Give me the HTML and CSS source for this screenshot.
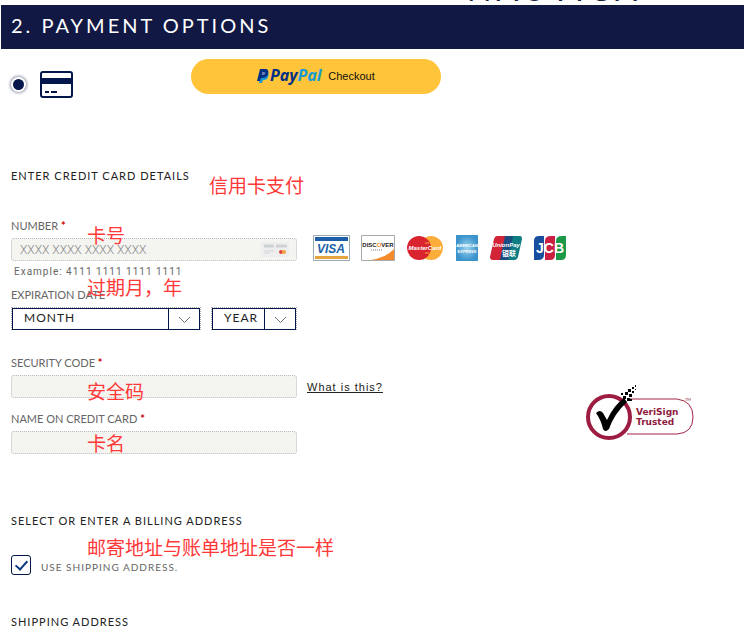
FILE: index.html
```html
<!DOCTYPE html>
<html lang="en">

<head>
    <meta charset="utf-8">
    <meta name="viewport" content="width=device-width, initial-scale=1">
    <title>Payment Options</title>
    <link rel="stylesheet" href="styles.css">
</head>

<body>
    <header class="brand"><span class="brand-name">NAUTICA</span></header>
    <h1 class="step-title">2. PAYMENT OPTIONS</h1>

    <main class="checkout">
        <div class="methods">
            <label class="method-card">
                <input class="method-radio" type="radio" name="method" aria-label="Credit card" checked>
                <svg width="33" height="27" viewBox="0 0 33 27">
                    <rect x="1" y="1" width="31" height="25" rx="2" fill="#fff" stroke="#03174a" stroke-width="2" />
                    <path d="M1 7h31v6H1z" fill="#03174a" />
                    <path d="M5 21h4M11 21h6" stroke="#03174a" stroke-width="2" />
                </svg>
            </label>
            <button class="paypal" type="button">
                <svg class="paypal-logo" width="68" height="18" viewBox="0 0 68 18" role="img" aria-label="PayPal">
                    <path d="M5 5h4c3 0 3 3 2 5-1 3-3 3-5 3l-1 3H2z" fill="#179bd7" />
                    <path d="M3 2h5c3 0 4 2 3 5-1 3-3 4-6 4H4l-1 3H0z" fill="#002f86" />
                    <path d="M5 5h2c2 0 2 3-1 3H5z" fill="#6c7fb4" />
                    <text class="paypal-text" x="13" y="14"><tspan fill="#002f86">Pay</tspan><tspan fill="#179bd7">Pal</tspan></text>
                </svg>
                <span>Checkout</span>
            </button>
        </div>

        <h2 class="heading">ENTER CREDIT CARD DETAILS
            <span class="note note-method" lang="zh">信用卡支付</span>
        </h2>

        <div class="number-row">
            <div class="field number-field">
                <label class="label" for="number">NUMBER <b class="req">*</b></label>
                <div class="number-box">
                    <input class="input" id="number" type="text" placeholder="XXXX XXXX XXXX XXXX">
                    <svg class="number-icon" width="28" height="15" viewBox="0 0 28 15">
                        <path d="M0 0h28v15H0z" fill="#eeeeef" />
                        <path d="M3 4h10M15 4h11" stroke="#cdd1d4" stroke-width="3" />
                        <path d="M3 9h10M3 11h6" stroke="#cfd3d6" />
                        <circle cx="20" cy="10" r="2" fill="#e0443e" />
                        <circle cx="23" cy="10" r="2" fill="#f5a33b" />
                    </svg>
                </div>
                <span class="note note-number" lang="zh">卡号</span>
            </div>

            <div class="cards">
                <!-- visa -->
                <svg width="37" height="26" viewBox="0 0 37 26">
                    <path d="M.5.5h36v25H.5z" fill="#fff" stroke="#9dabb0" />
                    <path d="M2 2h33v4H2z" fill="#1c5fa8" />
                    <path d="M2 21h33v3H2z" fill="#e5a43c" />
                    <text class="logo logo-visa" x="18" y="18">VISA</text>
                </svg>
                <!-- discover -->
                <svg width="34" height="26" viewBox="0 0 34 26">
                    <path d="M.5.5h33v25H.5z" fill="#fff" stroke="#a9a9a9" />
                    <path d="M33 14v11H10q16-3 23-11z" fill="#f58a2c" />
                    <text class="logo logo-discover" x="17" y="12">DISC<tspan fill="#f58a2c">O</tspan>VER</text>
                    <path d="M10 15h12" stroke="#777" stroke-dasharray="1 1" />
                </svg>
                <!-- mastercard -->
                <svg width="38" height="26" viewBox="0 0 38 26">
                    <circle cx="25" cy="13" r="12" fill="#fbad3c" />
                    <circle cx="13" cy="13" r="12" fill="#d9232e" />
                    <path d="M19 8h6M19 18h6" stroke="#fbad3c" stroke-dasharray="4 1" />
                    <text class="logo logo-master" x="19" y="15">MasterCard</text>
                </svg>
                <!-- american express -->
                <svg width="24" height="26" viewBox="0 0 24 26">
                    <defs>
                        <radialGradient id="amex">
                            <stop offset="0" stop-color="#9ad4ef" />
                            <stop offset="1" stop-color="#3b93cb" />
                        </radialGradient>
                    </defs>
                    <path d="M1 0h22v26H1z" fill="url(#amex)" />
                    <text class="logo logo-amex" x="12" y="12">AMERICAN</text>
                    <text class="logo logo-amex" x="12" y="18">EXPRESS</text>
                </svg>
                <!-- union pay -->
                <svg width="32" height="26" viewBox="0 0 32 26">
                    <path d="M7 1h10l-5 24H3q-3 0-3-3L4 4q1-3 3-3z" fill="#d32336" />
                    <path d="M15 1h9l-5 24h-9z" fill="#1b4b80" />
                    <path d="M23 1h7q2 0 2 3l-4 18q-1 3-3 3h-7z" fill="#0d7c83" />
                    <text class="logo logo-union" x="16" y="12">UnionPay</text>
                    <text class="logo logo-union-zh" x="19" y="21">银联</text>
                </svg>
                <!-- jcb -->
                <svg width="34" height="26" viewBox="0 0 34 26">
                    <path d="M6 1h5v19q0 5-6 5H1V6q0-5 5-5z" fill="#174e9e" />
                    <path d="M18 1h4v19q0 5-5 5h-5V6q0-5 6-5z" fill="#cb1f42" />
                    <path d="M29 1h4v19q0 5-5 5h-5V6q0-5 6-5z" fill="#1b9848" />
                    <text class="logo logo-jcb" x="17" y="18">JCB</text>
                </svg>
            </div>
        </div>

        <p class="example">Example: 4111 1111 1111 1111</p>

        <div class="field expiry">
            <span class="label">EXPIRATION DATE</span>
            <span class="note note-expiry" lang="zh">过期月，年</span>
            <div class="selects">
                <div class="select-box select-month">
                    <select class="select" aria-label="Month">
                        <option>MONTH</option>
                    </select>
                    <svg class="arrow" width="13" height="8" viewBox="0 0 13 8">
                        <path d="M1 1l5.500 5.500L12 1" fill="none" stroke="#777" />
                    </svg>
                </div>
                <div class="select-box select-year">
                    <select class="select" aria-label="Year">
                        <option>YEAR</option>
                    </select>
                    <svg class="arrow" width="13" height="8" viewBox="0 0 13 8">
                        <path d="M1 1l5.500 5.500L12 1" fill="none" stroke="#777" />
                    </svg>
                </div>
            </div>
        </div>

        <div class="verify">
            <div class="verify-fields">
                <div class="field">
                    <label class="label" for="code">SECURITY CODE <b class="req">*</b></label>
                    <div class="code-row">
                        <input class="input" id="code" type="text">
                        <a class="help" href="#">What is this?</a>
                    </div>
                    <span class="note note-code" lang="zh">安全码</span>
                </div>
                <div class="field">
                    <label class="label" for="name">NAME ON CREDIT CARD <b class="req">*</b></label>
                    <input class="input" id="name" type="text">
                    <span class="note note-name" lang="zh">卡名</span>
                </div>
            </div>
            <svg class="seal" width="110" height="56" viewBox="0 0 110 56">
                <path d="M42 14h50q16 2 16 18t-16 17H42" fill="#fff" stroke="#a32749" />
                <circle cx="24" cy="32" r="21" fill="#fff" stroke="#9d1c42" stroke-width="4" />
                <path d="M11 28q4-4 7 0l4 7q7-15 17-22l3 4Q29 29 24 44q-4 4-6 0-2-9-7-16z" fill="#000" />
                <path d="M38 11h3v3h-3zM42 13h3v3h-3zM40 7h3v3h-3zM44 9h3v3h-3zM43 4h3v3h-3zM47 6h2v2h-2zM47 2h2v2h-2zM50 4h1v1h-1zM50 0h1v2h-1zM36 8h2v2h-2zM45 14h2v2h-2z" fill="#000" />
                <text class="seal-text" x="51" y="30">VeriSign</text>
                <text class="seal-text" x="51" y="40">Trusted</text>
                <text class="seal-tm" x="100" y="16">TM</text>
            </svg>
        </div>

        <h2 class="heading">SELECT OR ENTER A BILLING ADDRESS</h2>
        <label class="same">
            <input class="check" type="checkbox" checked>
            <span>USE SHIPPING ADDRESS.</span>
            <span class="note note-address" lang="zh">邮寄地址与账单地址是否一样</span>
        </label>
        <h2 class="heading">SHIPPING ADDRESS</h2>
    </main>
</body>

</html>
```
FILE: styles.css
```css
* {
    box-sizing: border-box;
}

body {
    margin: 0;
    background: #fff;
    color: #222;
    font-family: Lato, "Noto Sans CJK SC", sans-serif;
}

.brand {
    display: flex;
    align-items: flex-end;
    justify-content: flex-end;
    height: 5px;
    padding-right: 104px;
    overflow: hidden;
}

.brand-name {
    color: #16223a;
    font-size: 32px;
    line-height: 32px;
    letter-spacing: 5px;
}

.step-title {
    margin: 0 2px 0 1px;
    padding: 0 10px 4px;
    background: #111844;
    color: #fff;
    font-size: 20px;
    font-weight: 400;
    line-height: 40px;
    letter-spacing: 3px;
}

.checkout {
    padding: 0 11px 6px;
}

.methods {
    display: flex;
    align-items: flex-start;
    gap: 118px;
    min-height: 119px;
    padding-top: 10px;
}

.method-card {
    display: flex;
    align-items: center;
    gap: 14px;
    padding-top: 12px;
}

.method-radio {
    appearance: none;
    width: 15px;
    height: 15px;
    margin: 0;
    border: 2px solid #fff;
    border-radius: 50%;
    background: #03174a;
    box-shadow: 0 0 3px 1px #8f93a8;
}

.paypal {
    display: flex;
    align-items: center;
    justify-content: center;
    gap: 3px;
    width: 250px;
    height: 35px;
    padding: 0 0 2px;
    border: 0;
    border-radius: 18px;
    background: #ffc439;
    color: #111;
    font-family: "Liberation Sans", Arial, sans-serif;
    font-size: 11px;
}

.paypal-logo {
    overflow: visible;
}

.paypal-text {
    font-family: "Noto Sans", sans-serif;
    font-size: 16px;
    font-style: italic;
    font-weight: 700;
}

.heading {
    position: relative;
    margin: 0;
    font-size: 11px;
    font-weight: 400;
    line-height: 16px;
    letter-spacing: 1px;
}

.number-row {
    display: flex;
    align-items: flex-end;
    gap: 16px;
    margin-top: 34px;
}

.field {
    position: relative;
}

.number-field {
    width: 286px;
}

.label {
    display: block;
    margin-bottom: 4px;
    color: #666;
    font-size: 11px;
    line-height: 16px;
}

.req {
    color: #c00;
}

.number-box {
    display: flex;
    align-items: center;
}

.input {
    display: block;
    flex: none;
    width: 286px;
    height: 23px;
    padding: 0 8px;
    border: 1px dotted #bbb;
    border-radius: 3px;
    background: #f4f4f0;
    font-family: Roboto, sans-serif;
    font-size: 12px;
}

.input::placeholder {
    color: #888;
    font-weight: 300;
}

.number-icon {
    flex: none;
    margin-left: -36px;
}

.cards {
    display: flex;
    gap: 11px;
}

.logo {
    fill: #fff;
    font-family: "Liberation Sans", Arial, sans-serif;
    font-weight: 700;
    text-anchor: middle;
}

.logo-visa {
    fill: #1c5fa8;
    font-size: 12px;
    font-style: italic;
}

.logo-discover {
    fill: #222;
    font-size: 6px;
}

.logo-master {
    font-size: 6px;
    font-style: italic;
}

.logo-amex {
    font-size: 4px;
}

.logo-union {
    font-size: 6px;
    font-style: italic;
}

.logo-union-zh {
    font-family: "Noto Sans CJK SC", sans-serif;
    font-size: 7px;
}

.logo-jcb {
    font-size: 14px;
}

.example {
    margin: 3px 3px 0;
    color: #666;
    font-family: Roboto, sans-serif;
    font-size: 10px;
    line-height: 16px;
    letter-spacing: 1px;
}

.expiry {
    margin-top: 7px;
}

.selects {
    display: flex;
    gap: 10px;
}

.select-box {
    display: flex;
    align-items: center;
    height: 23px;
    border: 1px dotted #aaa;
}

.select-month {
    width: 190px;
}

.select-year {
    width: 86px;
}

.select {
    appearance: none;
    flex: none;
    width: 100%;
    height: 22px;
    padding: 0 11px 2px;
    border: 1px solid #03174a;
    border-radius: 0;
    /* divider in front of the arrow */
    background: linear-gradient(#03174a, #03174a) right 30px top / 1px 100% no-repeat #fff;
    color: #222;
    font-family: Lato, sans-serif;
    font-size: 12px;
    letter-spacing: 1px;
}

.arrow {
    flex: none;
    margin-left: -22px;
    margin-top: 3px;
    pointer-events: none;
}

.verify {
    display: flex;
    align-items: flex-end;
    justify-content: space-between;
    margin: 25px 0 59px;
}

.verify-fields {
    display: grid;
    gap: 13px;
}

.code-row {
    display: flex;
    align-items: center;
    gap: 10px;
}

.help {
    color: #222;
    font-family: "Liberation Sans", Arial, sans-serif;
    font-size: 11px;
    letter-spacing: 1px;
}

.seal {
    margin: 0 40px 13px;
}

.seal-text {
    fill: #8e1b3e;
    font-family: "DejaVu Sans", sans-serif;
    font-size: 9px;
    font-weight: 700;
}

.seal-tm {
    fill: #8e1b3e;
    font-size: 4px;
}

.same {
    position: relative;
    display: flex;
    align-items: center;
    gap: 10px;
    margin: 26px 0 39px;
    color: #666;
    font-size: 10px;
    letter-spacing: 1px;
}

.same > span {
    padding-top: 4px;
}

.check {
    appearance: none;
    width: 20px;
    height: 20px;
    margin: 0;
    border: 1px solid #03174a;
    border-radius: 3px;
}

.check:checked::before {
    content: "";
    display: block;
    width: 5px;
    height: 10px;
    margin: 2px 6px;
    border: solid #0a3a80;
    border-width: 0 2px 2px 0;
    transform: rotate(42deg);
}

/* red explanations that lie over the form */
.note {
    position: absolute;
    left: 76px;
    color: #ff3838;
    font-family: "Noto Sans CJK SC", sans-serif;
    font-size: 19px;
    font-weight: 400;
    line-height: 24px;
    letter-spacing: 0;
    white-space: nowrap;
    pointer-events: none;
}

.note-method {
    top: 5px;
    left: 198px;
}

.note-number {
    top: 5px;
}

.note-expiry {
    top: -12px;
}

.note-code {
    top: 24px;
}

.note-name {
    top: 20px;
}

.same > .note-address {
    top: -20px;
    padding: 0;
}
```
